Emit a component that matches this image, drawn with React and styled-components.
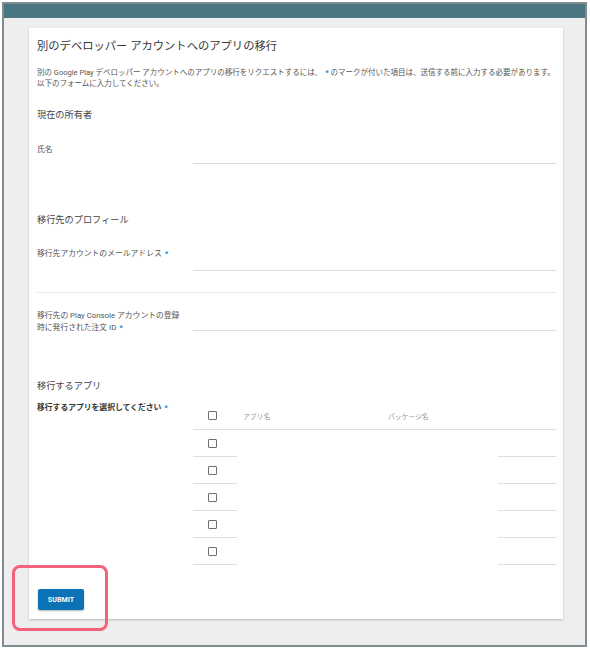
import React from "react";
import styled, { createGlobalStyle } from "styled-components";

const GlobalStyle = createGlobalStyle`
  html, body {
    margin: 0;
    padding: 0;
    background: #ffffff;
  }
  body {
    font-family: Roboto, "Noto Sans CJK JP", sans-serif;
    color: #444;
  }
`;

const Frame = styled.div`
  position: relative;
  box-sizing: border-box;
  width: 585px;
  height: 645px;
  margin: 2px 0 0 2px;
  border: 2px solid #7f8c90;
  background: #eeeeee;
  display: flex;
  flex-direction: column;
`;

const TopBar = styled.div`
  flex-shrink: 0;
  height: 14px;
  background: #4a7682;
`;

const Canvas = styled.div`
  padding: 10px 22px 0 25px;
`;

const Card = styled.div`
  background: #ffffff;
  box-shadow: 0 1px 2px rgba(0, 0, 0, 0.22);
  padding: 11px 7px 9px 8px;
`;

const Title = styled.h1`
  margin: 0;
  font-size: 11.3px;
  line-height: 15px;
  font-weight: 400;
  color: #383838;
`;

const Description = styled.p`
  margin: 13px 0 0;
  font-size: 7.5px;
  line-height: 11px;
  color: #555;
  white-space: nowrap;
`;

const SectionTitle = styled.h2`
  margin: ${(p) => p.$mt}px 0 0;
  font-size: 9.2px;
  line-height: 12px;
  font-weight: 400;
  color: #444;
`;

const FieldRow = styled.div`
  display: grid;
  grid-template-columns: 156px 1fr;
  margin-top: ${(p) => p.$mt}px;
`;

const Label = styled.div`
  max-width: 148px;
  font-size: 7.8px;
  line-height: 12px;
  font-weight: ${(p) => (p.$bold ? 700 : 400)};
  color: ${(p) => (p.$bold ? "#333" : "#555")};
`;

const Required = styled.span`
  color: #1a8ad0;
  margin-left: 3px;
  font-weight: 700;
`;

const Input = styled.div`
  box-sizing: border-box;
  height: ${(p) => p.$h}px;
  border-bottom: 1px solid #dcdcdc;
`;

const Divider = styled.hr`
  margin: 21px 0 0;
  border: 0;
  border-top: 1px solid #e6e6e6;
  height: 0;
`;

const AppTable = styled.div`
  display: grid;
  grid-template-columns: 44px 145px 116px 1fr;
`;

const Cell = styled.div`
  box-sizing: border-box;
  height: ${(p) => (p.$head ? 28 : 27)}px;
  display: flex;
  align-items: center;
  padding-left: ${(p) => (p.$check ? 15 : 6)}px;
  border-bottom: 1px solid ${(p) => (p.$line ? "#dedede" : "transparent")};
  font-size: 6.8px;
  color: #9a9a9a;
`;

const Checkbox = styled.span`
  box-sizing: border-box;
  width: 9px;
  height: 9px;
  border: 1.5px solid #6f6f6f;
  border-radius: 1px;
`;

const SubmitButton = styled.button`
  display: block;
  margin: 24px 0 0 1px;
  width: 46px;
  height: 21px;
  padding: 0;
  border: 0;
  border-radius: 2px;
  background: #0b72b5;
  box-shadow: 0 1px 2px rgba(0, 0, 0, 0.3);
  color: #ffffff;
  font-family: Roboto, sans-serif;
  font-size: 7px;
  font-weight: 700;
  letter-spacing: 0.1px;
`;

const Highlight = styled.div`
  position: absolute;
  left: 8px;
  top: 561px;
  box-sizing: border-box;
  width: 96px;
  height: 66px;
  border: 3px solid #f2627a;
  border-radius: 8px;
  pointer-events: none;
`;

const appRows = [1, 2, 3, 4, 5];

export default function App() {
  return (
    <>
      <GlobalStyle />
      <Frame>
        <TopBar />
        <Canvas>
          <Card>
            <Title>別のデベロッパー アカウントへのアプリの移行</Title>
            <Description>
              別の Google Play デベロッパー アカウントへのアプリの移行をリクエストするには、
              <Required>*</Required> のマークが付いた項目は、送信する前に入力する必要があります。
              <br />
              以下のフォームに入力してください。
            </Description>

            <SectionTitle $mt={20}>現在の所有者</SectionTitle>
            <FieldRow $mt={23}>
              <Label>氏名</Label>
              <Input $h={20} />
            </FieldRow>

            <SectionTitle $mt={50}>移行先のプロフィール</SectionTitle>
            <FieldRow $mt={22}>
              <Label>
                移行先アカウントのメールアドレス<Required>*</Required>
              </Label>
              <Input $h={23} />
            </FieldRow>
            <Divider />
            <FieldRow $mt={17}>
              <Label>
                移行先の Play Console アカウントの登録時に発行された注文 ID<Required>*</Required>
              </Label>
              <Input $h={21} />
            </FieldRow>

            <SectionTitle $mt={46}>移行するアプリ</SectionTitle>
            <FieldRow $mt={10}>
              <Label $bold>
                移行するアプリを選択してください<Required>*</Required>
              </Label>
              <AppTable>
                <Cell $head $check $line>
                  <Checkbox />
                </Cell>
                <Cell $head $line>アプリ名</Cell>
                <Cell $head $line>パッケージ名</Cell>
                <Cell $head $line />
                {appRows.map((row) => (
                  <React.Fragment key={row}>
                    <Cell $check $line>
                      <Checkbox />
                    </Cell>
                    <Cell />
                    <Cell />
                    <Cell $line />
                  </React.Fragment>
                ))}
              </AppTable>
            </FieldRow>

            <SubmitButton>SUBMIT</SubmitButton>
          </Card>
        </Canvas>
        <Highlight />
      </Frame>
    </>
  );
}
